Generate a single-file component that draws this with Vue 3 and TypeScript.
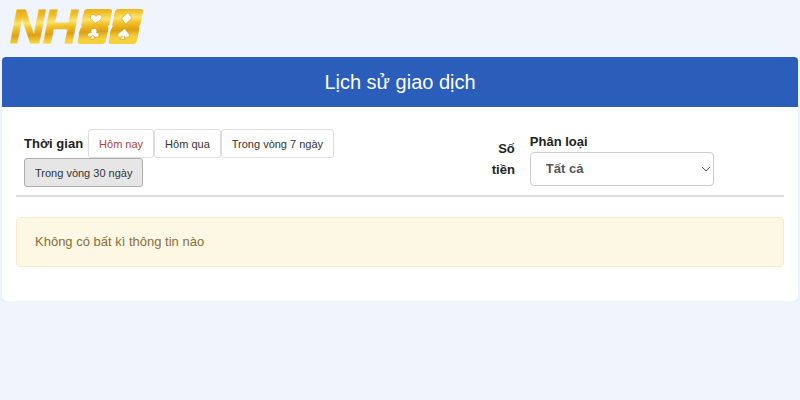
<script setup lang="ts">
import { ref } from 'vue'

interface Period {
  id: string
  label: string
}

const periods: Period[] = [
  { id: 'today', label: 'Hôm nay' },
  { id: 'yesterday', label: 'Hôm qua' },
  { id: 'week', label: 'Trong vòng 7 ngày' },
  { id: 'month', label: 'Trong vòng 30 ngày' },
]

const current = ref('month')
const category = ref('all')
</script>

<template>
  <div class="page">
    <header class="brand">
      <a href="#" aria-label="NH88">
        <svg class="logo" width="144" height="56" viewBox="8 0 144 56">
          <defs>
            <linearGradient id="gold" gradientUnits="userSpaceOnUse" x1="0" y1="9" x2="2" y2="44">
              <stop offset="0" stop-color="#e3a51c" />
              <stop offset="0.25" stop-color="#efbc24" />
              <stop offset="0.45" stop-color="#fbe46c" />
              <stop offset="0.6" stop-color="#f0c029" />
              <stop offset="0.8" stop-color="#dda013" />
              <stop offset="1" stop-color="#f5cf3c" />
            </linearGradient>
          </defs>
          <g fill="url(#gold)">
            <g transform="translate(9.5 0) skewX(-12)">
              <rect x="77" y="9" width="28" height="18" rx="3" />
              <rect x="77" y="26" width="28" height="18" rx="3" />
              <rect x="108" y="9" width="28" height="18" rx="3" />
              <rect x="108" y="26" width="28" height="18" rx="3" />
            </g>
            <text class="word" x="10 43 79 110" y="43">NH88</text>
          </g>
          <g class="suits">
            <path d="M95.500 23C92 20.500 89.500 18.500 90.500 16.200C91.500 14 95 14.200 96 16.500C97.500 14 101.500 14 101.800 16.800C102 19 98.500 21.500 95.500 23Z" />
            <path d="M128 12.500L132 18L125.500 24L121.500 18.500Z" />
            <path d="M94 28.500C96.800 28.500 97.500 31 96.400 32.800C99 32.200 100.300 36 97.500 37C95.500 37.700 94 36.800 93.500 35.600L94.500 39H90L92.300 35.600C91.300 37 89 37.600 87.900 36.200C86.700 34.500 88.800 32 91.400 32.800C90.200 31 91.500 28.500 94 28.500Z" />
            <path d="M124.500 28.500C126 31.500 130 33.500 129.300 35.700C128.400 38 125 37.400 124 36L125 39.500H120L122.500 36C121 37.700 118 37.700 117.500 35.500C117.200 33.500 122 31.500 124.500 28.500Z" />
          </g>
        </svg>
      </a>
    </header>

    <main class="panel">
      <h1 class="title">Lịch sử giao dịch</h1>
      <div class="body">
        <div class="filters">
          <div class="period" role="group" aria-labelledby="period-label">
            <span id="period-label" class="label">Thời gian</span>
            <div class="choices">
              <button
                v-for="period in periods"
                :key="period.id"
                type="button"
                class="choice"
                :class="{ today: period.id === 'today', active: period.id === current }"
                :aria-pressed="period.id === current"
                @click="current = period.id"
              >{{ period.label }}</button>
            </div>
          </div>
          <div class="amount label">Số tiền</div>
          <div class="category">
            <label class="label" for="category">Phân loại</label>
            <div class="select-wrap">
              <select id="category" v-model="category">
                <option value="all">Tất cả</option>
              </select>
              <svg class="chevron" width="10" height="6" viewBox="0 0 10 6" aria-hidden="true">
                <path d="M1 1L5 5L9 1" />
              </svg>
            </div>
          </div>
        </div>
        <p class="notice" role="status">Không có bất kì thông tin nào</p>
      </div>
    </main>
  </div>
</template>

<style>
body {
  margin: 0;
  background: #eff4fd;
}
</style>

<style scoped>
.page {
  padding: 0 2px;
  color: #333;
  font: 13px/20px "Liberation Sans", Arial, sans-serif;
}
.brand {
  padding: 0 6px 1px;
}
.brand a,
.logo {
  display: block;
}
.brand a {
  width: max-content;
}
.word {
  font: italic bold 48px "Liberation Sans", Arial, sans-serif;
  stroke: url(#gold);
  stroke-width: 1;
}
.suits {
  fill: #fffdf6;
  stroke: #c98f1a;
  stroke-width: 0.5;
}
.panel {
  border-radius: 4px;
  background: #fff;
  box-shadow: 0 1px 1px #d0d3e4;
}
.title {
  margin: 0;
  padding: 13px 16px;
  border-radius: 4px 4px 0 0;
  background: #2b5dbb;
  color: #fff;
  font-size: 20px;
  font-weight: 400;
  line-height: 24px;
  text-align: center;
}
.body {
  padding: 22px 14px 34px;
}
.filters {
  display: grid;
  grid-template-columns: 56% 11% 33%;
  align-items: start;
  padding: 0 8px 8px;
  border-bottom: 2px solid #ddd;
}
.label {
  color: #222;
  font-weight: 700;
}
.period .label {
  margin-right: 5px;
  vertical-align: middle;
}
.choices {
  display: contents;
}
.choice {
  height: 29px;
  padding: 0 10px;
  border: 1px solid #ddd;
  border-radius: 3px;
  background: #fff;
  color: #333;
  font: 11px/18px "Liberation Sans", Arial, sans-serif;
  vertical-align: middle;
  cursor: pointer;
}
.choice.today {
  color: #a94442;
}
.choice.active {
  border-color: #adadad;
  background: #e6e6e6;
}
.amount {
  width: min-content;
  margin-left: auto;
  padding: 9px 13px 0 0;
  line-height: 21px;
  text-align: right;
}
.category {
  padding: 3px 0 0 2px;
}
.category label {
  display: block;
}
.select-wrap {
  position: relative;
  width: 75%;
}
select {
  display: block;
  width: 100%;
  height: 34px;
  padding: 0 24px 0 15px;
  border: 1px solid #ccc;
  border-radius: 4px;
  appearance: none;
  background: #fff;
  color: #555;
  font: bold 13px/20px "Liberation Sans", Arial, sans-serif;
}
.chevron {
  position: absolute;
  top: 14px;
  right: 3px;
  fill: none;
  stroke: #555;
  pointer-events: none;
}
.notice {
  margin: 20px 0 0;
  padding: 14px 18px;
  border: 1px solid #faebcc;
  border-radius: 4px;
  background: #fcf8e3;
  color: #8a6d3b;
}
</style>
